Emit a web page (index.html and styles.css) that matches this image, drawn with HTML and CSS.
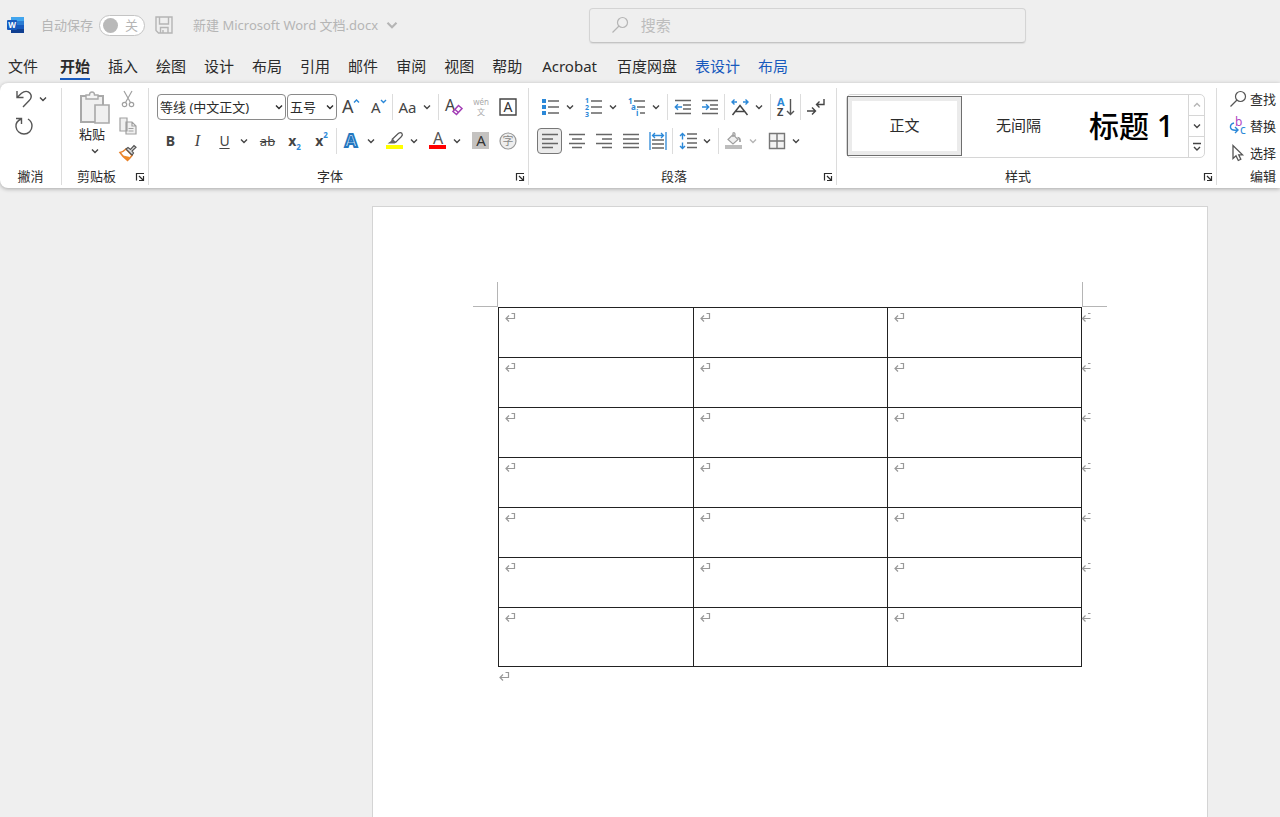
FILE: index.html
```html
<!DOCTYPE html>
<html lang="zh-CN">
<head>
    <meta charset="UTF-8">
    <title>新建 Microsoft Word 文档.docx</title>
    <link rel="stylesheet" href="styles.css">
</head>
<body>
    <!-- Shared symbols -->
    <svg class="symbols" aria-hidden="true">
        <symbol id="chevron" viewBox="0 0 8 8"><path d="M1 2.5 4 5.5 7 2.5" fill="none" stroke="currentColor" stroke-width="1.4"/></symbol>
        <symbol id="return" viewBox="0 0 12 12"><path d="M7.5 2.5H10.5V7.5H2M5 4.5 2 7.5 5 10.5" fill="none" stroke="currentColor" stroke-width="1.2"/></symbol>
        <symbol id="row-end" viewBox="0 0 12 12"><path d="M9.5 7.5H1.5M4.5 4.5 1.5 7.5 4.5 10.5M7 2.5H9.5" fill="none" stroke="currentColor" stroke-width="1.2"/></symbol>
        <symbol id="launcher" viewBox="0 0 10 10"><path d="M1.5 8.5V1.5H9M4 4 8 8M8.5 4V8.5H4" fill="none" stroke="currentColor" stroke-width="1.2"/></symbol>
        <symbol id="magnifier" viewBox="0 0 18 18"><circle cx="11.5" cy="6.5" r="5" fill="none" stroke="currentColor" stroke-width="1.2"/><path d="M8 10 1.5 16.5" stroke="currentColor" stroke-width="1.2"/></symbol>
    </svg>

    <header class="titlebar">
        <div class="titlebar-left">
            <svg class="word-logo" viewBox="0 0 18 18">
                <path d="M4 1H17V5.3H4z" fill="#41a5ee"/>
                <path d="M4 5H17V9.2H4z" fill="#2b7cd3"/>
                <path d="M4 9H17V13.2H4z" fill="#185abd"/>
                <path d="M4 13H17V17H4z" fill="#103f91"/>
                <rect x="0" y="4" width="10" height="10" rx="1" fill="#185abd"/>
                <text x="5" y="12" text-anchor="middle" font-size="8" font-weight="bold" fill="#fff">W</text>
            </svg>
            <label class="autosave">自动保存
                <span class="toggle">
                    <input type="checkbox" class="toggle-input">
                    <span class="toggle-knob"></span>
                    <span>关</span>
                </span>
            </label>
            <button class="save" aria-label="保存">
                <svg class="icon" viewBox="0 0 18 18" fill="none" stroke="#b5b5b5" stroke-width="1.4"><path d="M1 1H17V17H3.5L1 14.5zM4.5 1V8H13.5V1M5.5 17V11.5H13V17M8 14V17"/></svg>
            </button>
            <button class="doc-name">新建 Microsoft Word 文档.docx <svg class="chev-big"><use href="#chevron"/></svg></button>
        </div>
        <label class="search">
            <svg class="icon"><use href="#magnifier"/></svg>
            <input type="search" placeholder="搜索" aria-label="搜索">
        </label>
    </header>

    <nav class="tabs">
        <a href="#" class="tab tab-file">文件</a>
        <a href="#" class="tab active">开始</a>
        <a href="#" class="tab">插入</a>
        <a href="#" class="tab">绘图</a>
        <a href="#" class="tab">设计</a>
        <a href="#" class="tab">布局</a>
        <a href="#" class="tab">引用</a>
        <a href="#" class="tab">邮件</a>
        <a href="#" class="tab">审阅</a>
        <a href="#" class="tab">视图</a>
        <a href="#" class="tab">帮助</a>
        <a href="#" class="tab addin">Acrobat</a>
        <a href="#" class="tab addin">百度网盘</a>
        <a href="#" class="tab context">表设计</a>
        <a href="#" class="tab context">布局</a>
    </nav>

    <section class="ribbon">
        <div class="group undo-group">
            <div class="stack">
                <div class="row">
                    <button class="btn" aria-label="撤消"><svg class="icon" viewBox="0 0 18 18" fill="none" stroke="#555" stroke-width="1.4"><path d="M2 1V7.5H8.5M2 7.5 6.5 3.3C9.5.7 13 .8 15 3.2 17.2 6 16 8.8 14 10.8L8 17"/></svg></button>
                    <button class="chev" aria-label="撤消选项"><svg><use href="#chevron"/></svg></button>
                </div>
                <button class="btn" aria-label="重做"><svg class="icon" viewBox="0 0 18 18" fill="none" stroke="#555" stroke-width="1.4"><path d="M1 1.5H6.5V7M6.5 2C2.5 3.5.5 6.5 1 10 1.6 14 5 17 9 17 13.5 17 17 13.5 17 9 17 6 15.5 3.5 13 2"/></svg></button>
            </div>
            <div class="caption"><span>撇消</span></div>
        </div>

        <div class="group clip-group">
            <div class="clip-body">
                <button class="paste">
                    <svg class="paste-icon" viewBox="0 0 30 34">
                        <path d="M1 5H23V31H1z" fill="#f0f0f0" stroke="#a9a9a9" stroke-width="2"/>
                        <path d="M6 8V4H9.5Q9.5 1 12 1T14.5 4H18V8z" fill="#f5f5f5" stroke="#a9a9a9" stroke-width="1.4"/>
                        <path d="M15 14H29V32H15z" fill="#f0f0f0" stroke="#a9a9a9" stroke-width="1.6"/>
                    </svg>
                    <span>粘贴</span>
                    <svg class="chev-small"><use href="#chevron"/></svg>
                </button>
                <div class="stack">
                    <button class="btn" aria-label="剪切"><svg class="icon" viewBox="0 0 18 18" fill="none" stroke="#a0a0a0" stroke-width="1.2"><path d="M5 1 11.5 12.5M13 1 6.5 12.5"/><circle cx="5.5" cy="14.5" r="2.2"/><circle cx="12.5" cy="14.5" r="2.2"/></svg></button>
                    <button class="btn" aria-label="复制"><svg class="icon" viewBox="0 0 18 18" fill="#f0f0f0" stroke="#a0a0a0" stroke-width="1.2"><path d="M1 1H8V14H1zM7 5H13L17 9V17H7zM13 5V9H17M9.5 11.5H14.5M9.5 14H14.5"/></svg></button>
                    <button class="btn" aria-label="格式刷"><svg class="icon" viewBox="0 0 18 18"><path d="M1 8.5Q4 8 7 5L13 11.5Q11 14 8.5 16.5 4 13 1 8.5z" fill="#fff" stroke="#e8812a" stroke-width="1.5"/><path d="M4 11.5 11 13 8.5 16.5z" fill="#f08a24"/><path d="M7 5 9 3.5 11.5 5.5 15 1.5 17 3.2 13 7 14.5 9 13 11z" fill="#ddd" stroke="#555" stroke-width="1.2"/></svg></button>
                </div>
            </div>
            <div class="caption"><span>剪贴板</span><button class="launch" aria-label="剪贴板选项"><svg><use href="#launcher"/></svg></button></div>
        </div>

        <div class="group">
            <div class="row">
                <span class="combo combo-font">
                    <select aria-label="字体"><option>等线 (中文正文)</option></select>
                    <svg class="combo-arrow"><use href="#chevron"/></svg>
                </span>
                <span class="combo combo-size">
                    <select aria-label="字号"><option>五号</option></select>
                    <svg class="combo-arrow"><use href="#chevron"/></svg>
                </span>
                <button class="btn" aria-label="增大字号"><svg class="icon" viewBox="0 0 18 18"><text x="0" y="15" font-size="18" fill="#444">A</text><path d="M12 4.5 14.5 2 17 4.5" fill="none" stroke="#2b88d8" stroke-width="1.4"/></svg></button>
                <button class="btn" aria-label="减小字号"><svg class="icon" viewBox="0 0 18 18"><text x="2" y="15" font-size="15" fill="#444">A</text><path d="M12 2 14.5 4.5 17 2" fill="none" stroke="#2b88d8" stroke-width="1.4"/></svg></button>
                <span class="sep"></span>
                <button class="btn change-case">Aa</button>
                <button class="chev" aria-label="更改大小写选项"><svg><use href="#chevron"/></svg></button>
                <span class="sep"></span>
                <button class="btn" aria-label="清除格式"><svg class="icon" viewBox="0 0 18 18"><text x="0" y="13" font-size="16" fill="#444">A</text><path d="M13.5 7.5 17 10.5 11.5 16.5 8 13.5zM10 11.5 13.5 14.5" fill="#fff" stroke="#a33db5" stroke-width="1.5"/></svg></button>
                <button class="btn" aria-label="拼音指南"><svg class="icon" viewBox="0 0 18 18" fill="#aaa"><text x="9" y="7" text-anchor="middle" font-size="8">wén</text><text x="9" y="17" text-anchor="middle" font-size="8">文</text></svg></button>
                <button class="btn" aria-label="字符边框"><svg class="icon" viewBox="0 0 18 18"><path d="M1 1H17V17H1z" fill="none" stroke="#444" stroke-width="1.4"/><text x="9" y="14" text-anchor="middle" font-size="14" fill="#333">A</text></svg></button>
            </div>
            <div class="row">
                <button class="btn bold">B</button>
                <button class="btn italic">I</button>
                <button class="btn underline">U</button>
                <button class="chev" aria-label="下划线选项"><svg><use href="#chevron"/></svg></button>
                <button class="btn strike">ab</button>
                <button class="btn script">x<sub>2</sub></button>
                <button class="btn script">x<sup>2</sup></button>
                <span class="sep"></span>
                <button class="btn" aria-label="文本效果"><svg class="icon" viewBox="0 0 18 18"><text x="8" y="15" text-anchor="middle" font-size="18" font-weight="bold" fill="#d8ecfb" stroke="#2477bf" stroke-width="1.8">A</text></svg></button>
                <button class="chev" aria-label="文本效果选项"><svg><use href="#chevron"/></svg></button>
                <button class="btn" aria-label="突出显示"><svg class="icon" viewBox="0 0 18 18"><path d="M6.5 7 12.5 1.2Q14.5 0 15.8 1.2 17 2.8 15.5 4.5L10 10H8z" fill="#fff" stroke="#555" stroke-width="1.2"/><path d="M6 6.5 10.5 10.5 8.5 11.5H1.5L5 9z" fill="#666"/><path d="M0 13H17V17H0z" fill="#ff0"/></svg></button>
                <button class="chev" aria-label="突出显示选项"><svg><use href="#chevron"/></svg></button>
                <button class="btn" aria-label="字体颜色"><svg class="icon" viewBox="0 0 18 18"><text x="9" y="12" text-anchor="middle" font-size="16" fill="#555">A</text><path d="M0 13H17V17H0z" fill="red"/></svg></button>
                <button class="chev" aria-label="字体颜色选项"><svg><use href="#chevron"/></svg></button>
                <button class="btn" aria-label="字符底纹"><svg class="icon" viewBox="0 0 18 18"><path d="M0 0H17V17H0z" fill="#c4c2c0"/><text x="9" y="14" text-anchor="middle" font-size="15" fill="#333">A</text></svg></button>
                <button class="btn" aria-label="带圈字符"><svg class="icon" viewBox="0 0 18 18"><circle cx="9" cy="9" r="8" fill="#eee" stroke="#999" stroke-width="1.2"/><text x="9" y="13" text-anchor="middle" font-size="11" fill="#888">字</text></svg></button>
            </div>
            <div class="caption"><span>字体</span><button class="launch" aria-label="字体选项"><svg><use href="#launcher"/></svg></button></div>
        </div>

        <div class="group">
            <div class="row">
                <button class="btn" aria-label="项目符号"><svg class="icon" viewBox="0 0 18 18"><path d="M0 1H4V5H0zM0 7H4V11H0zM0 13H4V17H0z" fill="#2b88d8"/><path d="M6 3H17M6 9H17M6 15H17" stroke="#666" stroke-width="1.4"/></svg></button>
                <button class="chev" aria-label="项目符号选项"><svg><use href="#chevron"/></svg></button>
                <button class="btn" aria-label="编号"><svg class="icon" viewBox="0 0 18 18"><g font-size="7" font-weight="bold" fill="#2b88d8"><text x="0" y="5">1</text><text x="0" y="12">2</text><text x="0" y="19">3</text></g><path d="M6 3H17M6 9H17M6 15H17" stroke="#666" stroke-width="1.4"/></svg></button>
                <button class="chev" aria-label="编号选项"><svg><use href="#chevron"/></svg></button>
                <button class="btn" aria-label="多级列表"><svg class="icon" viewBox="0 0 18 18"><g font-size="8" font-weight="bold" fill="#2b88d8"><text x="0" y="6">1</text><text x="3" y="12">a</text><text x="8" y="18">i</text></g><path d="M6 3H17M9 9H17M12 15H17" stroke="#666" stroke-width="1.4"/></svg></button>
                <button class="chev" aria-label="多级列表选项"><svg><use href="#chevron"/></svg></button>
                <span class="sep"></span>
                <button class="btn" aria-label="减少缩进"><svg class="icon" viewBox="0 0 18 18" fill="none"><path d="M1 2.5H17M9 7H17M9 11H17M1 15.5H17" stroke="#666" stroke-width="1.4"/><path d="M8 9H1.5M4 6.3 1.3 9 4 11.7" stroke="#2b88d8" stroke-width="1.4"/></svg></button>
                <button class="btn" aria-label="增加缩进"><svg class="icon" viewBox="0 0 18 18" fill="none"><path d="M1 2.5H17M9 7H17M9 11H17M1 15.5H17" stroke="#666" stroke-width="1.4"/><path d="M1 9H7.5M5 6.3 7.7 9 5 11.7" stroke="#2b88d8" stroke-width="1.4"/></svg></button>
                <span class="sep"></span>
                <button class="btn" aria-label="中文版式"><svg class="icon" viewBox="0 0 18 18" fill="none"><path d="M1.5 17 9 7.5 16.5 17M4.5 13.5H13.5" stroke="#444" stroke-width="1.5"/><path d="M6 4H1M3.5 1.5 1 4 3.5 6.5M12 4H17M14.5 1.5 17 4 14.5 6.5" stroke="#2b88d8" stroke-width="1.4"/></svg></button>
                <button class="chev" aria-label="中文版式选项"><svg><use href="#chevron"/></svg></button>
                <span class="sep"></span>
                <button class="btn" aria-label="排序"><svg class="icon" viewBox="0 0 18 18"><g font-size="11" font-weight="bold"><text x="0" y="8" fill="#2b88d8">A</text><text x="0" y="18" fill="#444">Z</text></g><path d="M13.5 1V16.5M10 13 13.5 16.5 17 13" fill="none" stroke="#555" stroke-width="1.4"/></svg></button>
                <span class="sep"></span>
                <button class="btn" aria-label="显示编辑标记"><svg class="icon" viewBox="0 0 18 18" fill="none" stroke="#444" stroke-width="1.4"><path d="M17 1V6.5H9.5M12.5 3.5 9.5 6.5 12.5 9.5M0 13H8.5M5 9.5 8.5 13 5 16.5"/></svg></button>
            </div>
            <div class="row">
                <button class="btn pressed" aria-label="左对齐"><svg class="icon" viewBox="0 0 18 18"><path d="M1 2.5H17M1 7H12M1 11.5H17M1 15.5H12" stroke="#666" stroke-width="1.4"/></svg></button>
                <button class="btn" aria-label="居中"><svg class="icon" viewBox="0 0 18 18"><path d="M1 2.5H17M4 7H14M1 11.5H17M4 15.5H14" stroke="#666" stroke-width="1.4"/></svg></button>
                <button class="btn" aria-label="右对齐"><svg class="icon" viewBox="0 0 18 18"><path d="M1 2.5H17M7 7H17M1 11.5H17M7 15.5H17" stroke="#666" stroke-width="1.4"/></svg></button>
                <button class="btn" aria-label="两端对齐"><svg class="icon" viewBox="0 0 18 18"><path d="M1 2.5H17M1 7H17M1 11.5H17M1 15.5H17" stroke="#666" stroke-width="1.4"/></svg></button>
                <button class="btn" aria-label="分散对齐"><svg class="icon" viewBox="0 0 18 18" fill="none"><path d="M3 8H15M3 12H15M3 16H15" stroke="#666" stroke-width="1.4"/><path d="M1 0V18M17 0V18M3.5 3.5H14.5M6 1 3.5 3.5 6 6M12 1 14.5 3.5 12 6" stroke="#2b88d8" stroke-width="1.3"/></svg></button>
                <span class="sep"></span>
                <button class="btn" aria-label="行距"><svg class="icon" viewBox="0 0 18 18" fill="none"><path d="M8 2H18M8 6.5H18M8 11H18M8 15.5H18" stroke="#666" stroke-width="1.4"/><path d="M3.5 1.5V7.5M1 4 3.5 1.5 6 4M3.5 10.5V16.5M1 14 3.5 16.5 6 14" stroke="#2b88d8" stroke-width="1.4"/></svg></button>
                <button class="chev" aria-label="行距选项"><svg><use href="#chevron"/></svg></button>
                <span class="sep"></span>
                <button class="btn" aria-label="底纹"><svg class="icon" viewBox="0 0 18 18"><path d="M3 7.5 8 2.5 13 7.5 8 12zM8 5V1Q9.5 0 10 2V4.5" fill="#f0f0f0" stroke="#a0a0a0" stroke-width="1.2"/><path d="M12.5 5.5Q15.5 5.5 15 10" fill="none" stroke="#999" stroke-width="1.6"/><path d="M0 13H17V17H0z" fill="#bdbdbd"/></svg></button>
                <button class="chev faded" aria-label="底纹选项"><svg><use href="#chevron"/></svg></button>
                <button class="btn" aria-label="边框"><svg class="icon" viewBox="0 0 18 18"><path d="M1.5 1.5H16.5V16.5H1.5zM9 1.5V16.5M1.5 9H16.5" fill="#f3f3f3" stroke="#777" stroke-width="1.4"/></svg></button>
                <button class="chev" aria-label="边框选项"><svg><use href="#chevron"/></svg></button>
            </div>
            <div class="caption"><span>段落</span><button class="launch" aria-label="段落选项"><svg><use href="#launcher"/></svg></button></div>
        </div>

        <div class="group styles-group">
            <div class="gallery">
                <button class="style selected">正文</button>
                <button class="style">无间隔</button>
                <button class="style heading">标题 1</button>
                <div class="scroller">
                    <button class="faded" aria-label="上一行"><svg class="chev-small up"><use href="#chevron"/></svg></button>
                    <button aria-label="下一行"><svg class="chev-small"><use href="#chevron"/></svg></button>
                    <button aria-label="其他"><svg class="icon-more" viewBox="0 0 8 10"><path d="M0 1.5H8M1 5 4 8 7 5" fill="none" stroke="#444" stroke-width="1.4"/></svg></button>
                </div>
            </div>
            <div class="caption"><span>样式</span><button class="launch" aria-label="样式选项"><svg><use href="#launcher"/></svg></button></div>
        </div>

        <div class="group edit-group">
            <div class="stack">
                <button class="edit"><svg class="icon"><use href="#magnifier"/></svg>查找</button>
                <button class="edit"><svg class="icon" viewBox="0 0 18 18"><text x="6" y="9" font-size="12" fill="#b146c2">b</text><text x="11" y="17" font-size="12" fill="#2b88d8">c</text><path d="M5 6Q1 7 1.5 10.5 2.5 14 8.5 13M6 10 9 13 6 16" fill="none" stroke="#2b88d8" stroke-width="1.4"/></svg>替换</button>
                <button class="edit"><svg class="icon" viewBox="0 0 18 18"><path d="M4 1.5V14.5L7 11.8 9.3 16.5 11.8 15.3 9.7 10.8H13.5z" fill="#fff" stroke="#555" stroke-width="1.3"/></svg>选择</button>
            </div>
            <div class="caption"><span>编辑</span></div>
        </div>
    </section>

    <main class="workspace">
        <article class="page">
            <div class="table-wrap">
                <span class="crop crop-left"></span>
                <span class="crop crop-right"></span>
                <table class="grid">
                    <tr><td><svg class="mark"><use href="#return"/></svg></td><td><svg class="mark"><use href="#return"/></svg></td><td><svg class="mark"><use href="#return"/></svg><svg class="mark end"><use href="#row-end"/></svg></td></tr>
                    <tr><td><svg class="mark"><use href="#return"/></svg></td><td><svg class="mark"><use href="#return"/></svg></td><td><svg class="mark"><use href="#return"/></svg><svg class="mark end"><use href="#row-end"/></svg></td></tr>
                    <tr><td><svg class="mark"><use href="#return"/></svg></td><td><svg class="mark"><use href="#return"/></svg></td><td><svg class="mark"><use href="#return"/></svg><svg class="mark end"><use href="#row-end"/></svg></td></tr>
                    <tr><td><svg class="mark"><use href="#return"/></svg></td><td><svg class="mark"><use href="#return"/></svg></td><td><svg class="mark"><use href="#return"/></svg><svg class="mark end"><use href="#row-end"/></svg></td></tr>
                    <tr><td><svg class="mark"><use href="#return"/></svg></td><td><svg class="mark"><use href="#return"/></svg></td><td><svg class="mark"><use href="#return"/></svg><svg class="mark end"><use href="#row-end"/></svg></td></tr>
                    <tr><td><svg class="mark"><use href="#return"/></svg></td><td><svg class="mark"><use href="#return"/></svg></td><td><svg class="mark"><use href="#return"/></svg><svg class="mark end"><use href="#row-end"/></svg></td></tr>
                    <tr class="last"><td><svg class="mark"><use href="#return"/></svg></td><td><svg class="mark"><use href="#return"/></svg></td><td><svg class="mark"><use href="#return"/></svg><svg class="mark end"><use href="#row-end"/></svg></td></tr>
                </table>
            </div>
            <p class="after-table"><svg class="mark"><use href="#return"/></svg></p>
        </article>
    </main>
</body>
</html>
```
FILE: styles.css
```css
* {
    box-sizing: border-box;
}
body {
    margin: 0;
    min-height: 100vh;
    display: flex;
    flex-direction: column;
    overflow: hidden;
    background: #efefef;
    color: #2b2b2b;
    font-family: "Noto Sans", "Noto Sans CJK SC", sans-serif;
    font-size: 13px;
}
button, input, select {
    font: inherit;
    color: inherit;
    background: none;
    border: 0;
    padding: 0;
    margin: 0;
}
svg {
    display: block;
    flex: none;
}
.symbols {
    position: absolute;
    width: 0;
    height: 0;
}
.icon {
    width: 18px;
    height: 18px;
    overflow: visible;
}

/* Title bar */
.titlebar {
    display: flex;
    align-items: center;
    height: 50px;
    color: #b5b5b5;
}
.titlebar-left {
    flex: 0 0 46%;
    display: flex;
    align-items: center;
    padding-left: 7px;
}
.word-logo {
    width: 18px;
    height: 18px;
    margin-right: 16px;
}
.autosave {
    display: flex;
    align-items: center;
    gap: 6px;
    line-height: 18px;
}
.toggle {
    position: relative;
    display: flex;
    align-items: center;
    justify-content: space-between;
    width: 46px;
    height: 21px;
    padding: 0 6px 0 3px;
    border: 1px solid #c4c4c4;
    border-radius: 11px;
    background: #fff;
}
.toggle-input {
    position: absolute;
    inset: 0;
    opacity: 0;
}
.toggle-knob {
    width: 15px;
    height: 15px;
    border-radius: 50%;
    background: #b9b9b9;
}
.save {
    margin: 0 20px 0 10px;
}
.doc-name {
    display: flex;
    align-items: center;
    gap: 8px;
    line-height: 18px;
    white-space: nowrap;
}
.chev-big {
    width: 12px;
    height: 12px;
}
.search {
    flex: 0 1 437px;
    display: flex;
    align-items: center;
    gap: 12px;
    height: 35px;
    padding: 0 21px;
    border: 1px solid #d4d4d4;
    border-bottom-color: #c4c4c4;
    border-radius: 4px;
    box-shadow: 0 1px 1px #dcdcdc;
}
.search input {
    flex: 1;
    min-width: 0;
    font-size: 15px;
    line-height: 20px;
    outline: none;
}
.search input::placeholder {
    color: #bdbdbd;
}

/* Ribbon tabs */
.tabs {
    display: flex;
    gap: 18px;
    padding: 6px 8px 3px;
}
.tab {
    padding-bottom: 2px;
    font-size: 15px;
    line-height: 20px;
    border-bottom: 2px solid transparent;
    color: #2b2b2b;
    text-decoration: none;
    white-space: nowrap;
}
.tab-file {
    margin-right: 4px;
}
.tab.addin {
    margin-left: 2px;
}
.tab.active {
    font-weight: bold;
    border-bottom-color: #185abd;
}
.tab.context {
    color: #185abd;
}

/* Ribbon */
.ribbon {
    display: flex;
    padding: 5px 0 3px;
    background: #fff;
    border-radius: 8px 0 0 8px;
    box-shadow: 0 1px 4px rgba(0, 0, 0, 0.3);
}
.group {
    display: flex;
    flex-direction: column;
    padding: 6px 7px 0 8px;
    border-right: 1px solid #dcdcdc;
}
.row {
    display: flex;
    align-items: center;
    height: 26px;
}
.row + .row {
    margin-top: 8px;
}
.stack {
    display: flex;
    flex-direction: column;
    align-items: flex-start;
}
.btn {
    display: flex;
    align-items: center;
    justify-content: center;
    width: 27px;
    height: 26px;
    line-height: 16px;
    color: #444;
}
.btn.pressed {
    width: 25px;
    margin-right: 1px;
    border: 1px solid #777;
    border-radius: 4px;
    background: #ebebeb;
}
.chev {
    display: flex;
    align-items: center;
    justify-content: center;
    width: 12px;
    height: 26px;
    margin-right: 4px;
    color: #444;
}
.chev svg, .chev-small {
    width: 8px;
    height: 8px;
}
.chev.faded {
    color: #b5b5b5;
}
.sep {
    width: 1px;
    height: 26px;
    margin: 0 1px;
    background: #dcdcdc;
}
.caption {
    display: flex;
    align-items: center;
    height: 19px;
    margin: auto -6px 0 -8px;
    line-height: 18px;
}
.caption span {
    flex: 1;
    text-align: center;
}
.launch {
    width: 10px;
    margin: 3px 2px 0 4px;
}
.launch svg {
    width: 10px;
    height: 10px;
}

.undo-group {
    padding: 0 0 0 10px;
    width: 62px;
}
.undo-group .caption {
    margin: auto 0 0 -10px;
}
.undo-group .row, .undo-group .btn, .clip-group .btn {
    height: 27px;
}
.undo-group .stack, .clip-group .stack, .edit-group .stack {
    height: 81px;
    margin-top: -3px;
}
.undo-group .chev {
    margin-right: 0;
}

.clip-group {
    padding: 0 7px 0 15px;
}
.clip-group .caption {
    margin: auto -6px 0 -15px;
}
.clip-body {
    display: flex;
    gap: 2px;
}
.paste {
    display: flex;
    flex-direction: column;
    align-items: center;
    width: 35px;
    padding-top: 3px;
    line-height: 18px;
}
.paste span {
    margin: 0 5px 4px 0;
}
.paste-icon {
    width: 30px;
    height: 34px;
}
.chev-small {
    color: #444;
}

/* Font group */
.combo {
    position: relative;
    height: 26px;
    border: 1px solid #8a8a8a;
    border-radius: 4px;
}
.combo select {
    width: 100%;
    height: 24px;
    padding-left: 2px;
    appearance: none;
}
.combo-font {
    width: 129px;
    margin-right: 1px;
}
.combo-size {
    width: 50px;
}
.combo-arrow {
    position: absolute;
    right: 2px;
    top: 8px;
    width: 8px;
    height: 8px;
    pointer-events: none;
}
.change-case {
    font-size: 15px;
}
.bold {
    font-size: 14px;
    font-weight: bold;
}
.italic {
    font-family: "Liberation Serif", serif;
    font-size: 16px;
    font-style: italic;
}
.underline {
    font-size: 14px;
    text-decoration: underline;
    text-underline-offset: 2px;
}
.strike {
    text-decoration: line-through;
}
.script {
    font-size: 14px;
    font-weight: bold;
}
.script sub, .script sup {
    font-size: 8px;
    line-height: 14px;
    color: #2b88d8;
}
.script sub {
    align-self: flex-end;
}
.script sup {
    align-self: flex-start;
}

/* Styles gallery */
.styles-group {
    flex: 1;
    padding: 6px 11px 0 9px;
}
.styles-group .caption {
    margin: auto -10px 0 -9px;
}
.gallery {
    display: flex;
    align-items: center;
    height: 64px;
    border: 1px solid #d6d6d6;
    border-radius: 5px;
}
.style {
    flex: 1;
    height: 60px;
    padding-bottom: 4px;
    font-size: 15px;
    white-space: nowrap;
}
.style.selected {
    border: 1px solid #6e6e6e;
    box-shadow: inset 0 0 0 4px #ebebeb;
}
.style.heading {
    font-size: 30px;
    font-weight: 500;
    color: #000;
}
.scroller {
    display: flex;
    flex-direction: column;
    align-self: stretch;
    width: 16px;
    border-left: 1px solid #d6d6d6;
}
.scroller button {
    flex: 1;
    display: flex;
    align-items: center;
    justify-content: center;
}
.scroller button + button {
    border-top: 1px solid #d6d6d6;
}
.scroller .faded svg {
    color: #b5b5b5;
}
.up {
    transform: rotate(180deg);
}
.icon-more {
    width: 8px;
    height: 10px;
}

/* Editing group */
.edit-group {
    flex: none;
    width: 63px;
    padding: 0 0 0 12px;
    border-right: 0;
}
.edit-group .caption {
    margin: auto 0 0 21px;
}
.edit-group .caption span {
    text-align: left;
}
.edit {
    display: flex;
    align-items: center;
    gap: 3px;
    height: 27px;
    line-height: 18px;
    white-space: nowrap;
}
.edit .icon {
    color: #555;
}

/* Document */
.workspace {
    flex: 1;
    display: flex;
    padding-top: 18px;
}
.page {
    width: 65.3%;
    margin-left: 29.1%;
    padding: 100px 125px 0;
    background: #fff;
    border: 1px solid #d4d4d4;
    border-bottom: 0;
}
.table-wrap {
    position: relative;
}
.grid {
    width: 100%;
    table-layout: fixed;
    border-collapse: collapse;
}
.grid td {
    position: relative;
    height: 50px;
    padding: 3px 0 0 5px;
    border: 1px solid #222;
    vertical-align: top;
}
.grid .last td {
    height: 59px;
}
.mark {
    width: 12px;
    height: 12px;
    color: #999;
}
.mark.end {
    position: absolute;
    top: 3px;
    left: 100%;
}
.crop {
    position: absolute;
    top: -25px;
    width: 25px;
    height: 25px;
    border-bottom: 1px solid #b5b5b5;
}
.crop-left {
    right: 100%;
    border-right: 1px solid #b5b5b5;
}
.crop-right {
    left: 100%;
    border-left: 1px solid #b5b5b5;
}
.after-table {
    margin: 3px 0 0;
}
```
